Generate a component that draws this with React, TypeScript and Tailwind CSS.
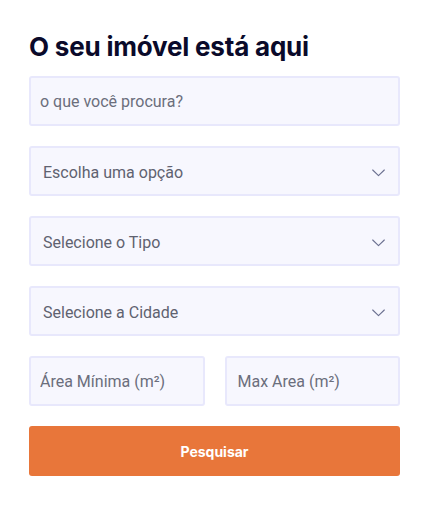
const fieldBase =
  'h-[50px] w-full rounded-[3px] border-2 border-[#e8e8fc] bg-[#f7f7fe] text-[16px] text-[#5f6270] outline-none';

const Chevron = () => (
  <svg width="13" height="8" viewBox="0 0 13 8" fill="none" className="shrink-0">
    <path d="M0.7 1 L6.5 6.6 L12.3 1" stroke="#6b7090" strokeWidth="1.1" strokeLinecap="round" strokeLinejoin="round" />
  </svg>
);

const SelectField = ({ label }: { label: string }) => (
  <div className={`${fieldBase} flex items-center justify-between pl-3 pr-[13px] pt-[3px]`}>
    <span>{label}</span>
    <Chevron />
  </div>
);

const App = () => {
  return (
    <div className="min-h-screen bg-white px-[29px] pt-[31px]" style={{ fontFamily: 'Roboto, sans-serif' }}>
      <h1
        className="mb-[13px] text-[26px] font-bold leading-[32px] tracking-[-0.2px] text-[#0a0a2a]"
        style={{ fontFamily: 'Inter, sans-serif' }}
      >
        O seu imóvel está aqui
      </h1>

      <div className="flex w-[371px] flex-col gap-5">
        <input
          type="text"
          placeholder="o que você procura?"
          className={`${fieldBase} px-[9px] placeholder:text-[#6b6e7c]`}
        />
        <SelectField label="Escolha uma opção" />
        <SelectField label="Selecione o Tipo" />
        <SelectField label="Selecione a Cidade" />

        <div className="grid grid-cols-2 gap-5">
          <input
            type="text"
            placeholder="Área Mínima (m²)"
            className={`${fieldBase} px-[9px] placeholder:text-[#6b6e7c]`}
          />
          <input
            type="text"
            placeholder="Max Area (m²)"
            className={`${fieldBase} px-[11px] placeholder:text-[#6b6e7c]`}
          />
        </div>

        <button
          className="h-[50px] w-full rounded-[3px] bg-[#e8763a] text-[14px] font-bold text-white"
          style={{ fontFamily: 'Inter, sans-serif' }}
        >
          Pesquisar
        </button>
      </div>
    </div>
  );
};

export default App;
